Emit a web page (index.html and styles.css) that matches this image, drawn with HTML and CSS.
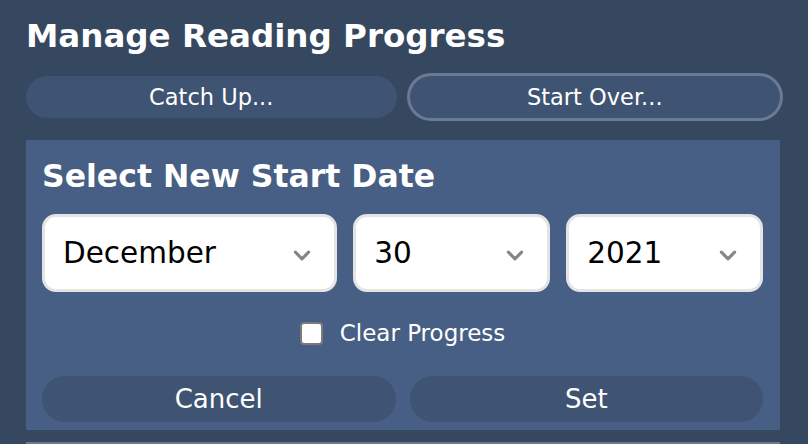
FILE: index.html
```html
<!DOCTYPE html>
<html>
<head>
<meta charset="utf-8">
<link rel="stylesheet" href="styles.css">
</head>
<body>
<div class="page">
  <h1 class="title">Manage Reading Progress</h1>
  <div class="actions">
    <button class="btn">Catch Up...</button>
    <button class="btn btn-focus">Start Over...</button>
  </div>
  <section class="panel">
    <h2 class="panel-title">Select New Start Date</h2>
    <div class="selects">
      <div class="select"><span>December</span><svg class="chev" viewBox="0 0 16 10"><path d="M2 2 L8 8 L14 2" fill="none" stroke="#858585" stroke-width="2.8" stroke-linecap="round" stroke-linejoin="round"/></svg></div>
      <div class="select"><span>30</span><svg class="chev" viewBox="0 0 16 10"><path d="M2 2 L8 8 L14 2" fill="none" stroke="#858585" stroke-width="2.8" stroke-linecap="round" stroke-linejoin="round"/></svg></div>
      <div class="select"><span>2021</span><svg class="chev" viewBox="0 0 16 10"><path d="M2 2 L8 8 L14 2" fill="none" stroke="#858585" stroke-width="2.8" stroke-linecap="round" stroke-linejoin="round"/></svg></div>
    </div>
    <label class="check"><span class="box"></span><span>Clear Progress</span></label>
    <div class="actions actions-panel">
      <button class="btn">Cancel</button>
      <button class="btn">Set</button>
    </div>
  </section>
  <div class="next"></div>
</div>
</body>
</html>
```

FILE: styles.css
```css
html, body {
  margin: 0;
  padding: 0;
  background: #364760;
  height: 100%;
  overflow: hidden;
}
.page {
  padding: 0 28px 0 26px;
  font-family: "DejaVu Sans", Verdana, sans-serif;
  color: #fff;
}
.title {
  margin: 0;
  padding-top: 16px;
  height: 60px;
  box-sizing: border-box;
  font-size: 32.5px;
  font-weight: bold;
  line-height: 40px;
}
.actions {
  display: flex;
  gap: 13px;
  height: 42px;
  margin-top: 16px;
}
.btn {
  flex: 1 1 0;
  min-width: 0;
  border: none;
  border-radius: 21px;
  background: #3f5372;
  color: #fff;
  font-family: "DejaVu Sans", Verdana, sans-serif;
  font-size: 22.5px;
  padding: 0;
  margin: 0;
}
.btn-focus {
  box-shadow: 0 0 0 3px #6b7a93;
}
.panel {
  margin-top: 22px;
  background: #475f84;
  padding: 16px 17px 8px 16px;
  height: 290px;
  box-sizing: border-box;
}
.panel-title {
  margin: 0;
  font-size: 31.5px;
  font-weight: bold;
  line-height: 40px;
  height: 58px;
}
.selects {
  display: grid;
  grid-template-columns: 3fr 2fr 2fr;
  gap: 16px;
  height: 78px;
}
.select {
  box-sizing: border-box;
  min-width: 0;
  border: 3px solid #e4e4e4;
  border-radius: 14px;
  background: #fff;
  color: #000;
  display: flex;
  align-items: center;
  justify-content: space-between;
  padding: 0 23px 0 18px;
  font-size: 29.5px;
}
.chev {
  width: 18px;
  height: 11px;
  margin-top: 4px;
}
.check {
  display: flex;
  justify-content: center;
  align-items: center;
  gap: 17px;
  height: 50px;
  margin-top: 16px;
  font-size: 23px;
}
.box {
  width: 19px;
  height: 19px;
  border: 2px solid #7a7a7a;
  border-radius: 4px;
  background: #fff;
}
.actions-panel {
  margin-top: 18px;
  height: 46px;
  gap: 14px;
}
.actions-panel .btn {
  border-radius: 23px;
  font-size: 26px;
}
.next {
  margin-top: 12px;
  height: 10px;
  background: #6c7790;
}
```
